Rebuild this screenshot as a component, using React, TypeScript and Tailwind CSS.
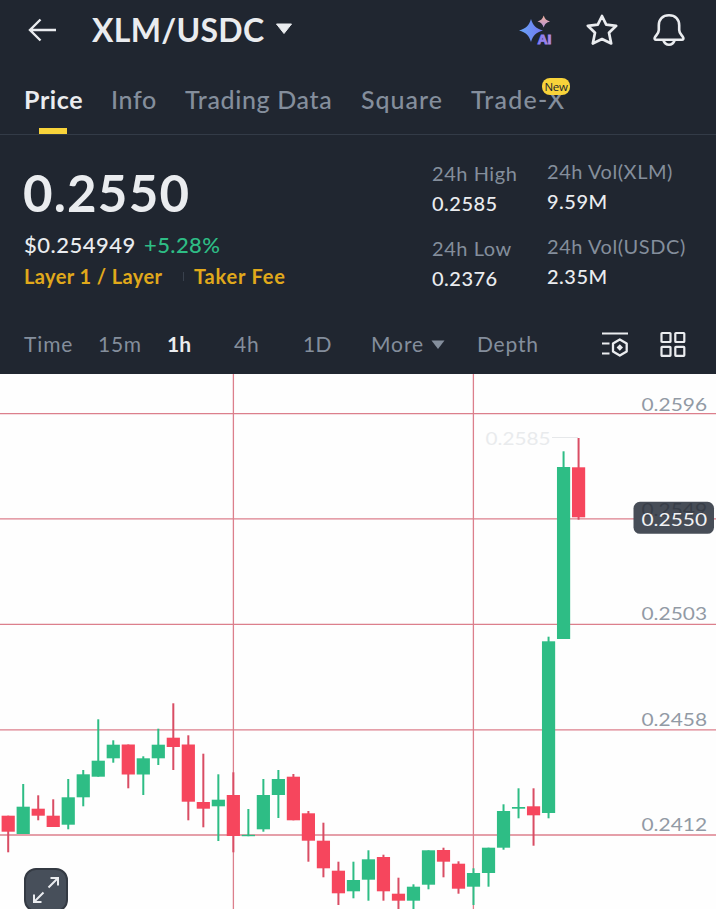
import React from "react";
import clsx from "clsx";

type Candle = {
  high: number;
  top: number;
  bottom: number;
  low: number;
  up: boolean;
};

const CHART_TOP = 374;
const CANDLE_GAP = 15.01;
const UP = "#2ebd85";
const DOWN = "#f6465d";
const DOWN_WICK = "#d94d64";

// [high, body top, body bottom, low, up]
const rows: [number, number, number, number, 0 | 1][] = [
  [815.7, 815.7, 831.7, 852.3, 0],
  [784, 806.7, 834, 834, 1],
  [795.3, 808.7, 815.7, 820.3, 0],
  [799.3, 815.7, 827, 827, 0],
  [779, 797.3, 824.7, 829.3, 1],
  [770, 774.3, 797.3, 806.3, 1],
  [719.3, 760.7, 776.7, 776.7, 1],
  [740.3, 744.7, 758.3, 762.7, 1],
  [744.5, 744.5, 774.5, 788.3, 0],
  [756.3, 758.3, 774.5, 795, 1],
  [728.7, 744.7, 758.3, 765, 1],
  [703.3, 737.7, 747, 770, 0],
  [735.3, 744.5, 801.7, 820.3, 0],
  [753.7, 802, 808.7, 827.3, 0],
  [774.3, 799.7, 806.3, 841, 1],
  [772.3, 795, 836, 852.3, 0],
  [809, 834.8, 836.2, 836.2, 1],
  [779, 795, 829.3, 831.7, 1],
  [770, 779, 795, 818, 1],
  [774, 776.7, 820.3, 820.3, 0],
  [811, 813.3, 840.7, 861.7, 0],
  [822.7, 840.7, 868.3, 877.3, 0],
  [861.7, 870.7, 893.3, 905, 0],
  [861.7, 880, 891.3, 898.3, 1],
  [850.3, 859.3, 879.7, 900.7, 1],
  [854.7, 857, 891.3, 900.7, 0],
  [877.7, 893.7, 900.7, 909, 0],
  [884.3, 886.7, 900.7, 909, 1],
  [850.3, 850.3, 884.7, 889.3, 1],
  [847.7, 850, 861.7, 877.3, 0],
  [861.3, 863.7, 888.7, 893.7, 0],
  [868.3, 873, 886.7, 905, 1],
  [847.7, 847.7, 873, 886.7, 1],
  [804.3, 811, 847.7, 849.7, 1],
  [788.3, 807, 808.7, 818.3, 1],
  [788.3, 806.3, 815.3, 845.7, 0],
  [636.7, 641.3, 813, 818.3, 1],
  [451.3, 467, 639, 639, 1],
  [438, 467.3, 517.3, 519.7, 0],
];

const candles: Candle[] = rows.map(([high, top, bottom, low, up]) => ({
  high: high - CHART_TOP,
  top: top - CHART_TOP,
  bottom: bottom - CHART_TOP,
  low: low - CHART_TOP,
  up: up === 1,
}));

const gridY = [39.6, 144.8, 250.4, 355.8, 461];
const gridX = [233.4, 473.4];

const axisLabels = [
  { text: "0.2596", y: 36.5 },
  { text: "0.2503", y: 246.3 },
  { text: "0.2458", y: 352.3 },
  { text: "0.2412", y: 457.3 },
];

const tabs = [
  { name: "Price", className: "w-[87px] tracking-[0.6px]" },
  { name: "Info", className: "w-[74px] tracking-[0.6px]" },
  { name: "Trading Data", className: "w-[176px] tracking-[0.65px]" },
  { name: "Square", className: "w-[110px] tracking-[1px]" },
  { name: "Trade-X", className: "w-[96px] tracking-[1.2px]" },
];

const intervals = [
  { name: "Time", className: "w-[74px] tracking-[0.9px]" },
  { name: "15m", className: "w-[69px] tracking-[0.7px]" },
  { name: "1h", className: "w-[67px]" },
  { name: "4h", className: "w-[69px] tracking-[0.9px]" },
  { name: "1D", className: "w-[68px] tracking-[0.3px]" },
];

const AiIcon = () => (
  <svg width="36" height="32" viewBox="0 0 36 32" className="block">
    <defs>
      <linearGradient id="ai-main" x1="0" y1="0" x2="1" y2="0">
        <stop offset="0" stopColor="#67a5f5" />
        <stop offset="1" stopColor="#7476f4" />
      </linearGradient>
      <linearGradient id="ai-small" x1="0" y1="0" x2="0" y2="1">
        <stop offset="0" stopColor="#efb09a" />
        <stop offset="1" stopColor="#b893d8" />
      </linearGradient>
      <linearGradient id="ai-text" x1="0" y1="0" x2="1" y2="0">
        <stop offset="0" stopColor="#817cf5" />
        <stop offset="1" stopColor="#b18ae4" />
      </linearGradient>
    </defs>
    <path
      d="M14 5C15.900 11.500 19 14.400 26 16.500C19 18.600 15.900 21.300 14 28C12.100 21.300 9 18.600 2 16.500C9 14.400 12.100 11.500 14 5Z"
      fill="url(#ai-main)"
    />
    <path
      d="M26.700 1.500C27.900 4.900 29.400 6.500 33 7.500C29.400 8.500 27.900 10 26.700 13.500C25.500 10 24 8.500 20.500 7.500C24 6.500 25.500 4.900 26.700 1.500Z"
      fill="url(#ai-small)"
    />
    <text
      x="20.500"
      y="29.500"
      fill="url(#ai-text)"
      stroke="url(#ai-text)"
      strokeWidth="0.800"
      textLength="14"
      lengthAdjust="spacingAndGlyphs"
      className="font-['Liberation_Sans',sans-serif] text-[12px] font-bold"
    >
      AI
    </text>
  </svg>
);

const StarIcon = () => (
  <svg width="34" height="34" viewBox="0 0 34 34" fill="none" className="block">
    <path
      d="M17 3L21.200 11.600L31.200 12.800L24 19.800L26.200 30.500L17 26L7.800 30.500L10 19.800L2.800 12.800L12.800 11.600Z"
      stroke="#eaecef"
      strokeWidth="2.700"
      strokeLinejoin="round"
    />
  </svg>
);

const BellIcon = () => (
  <svg width="34" height="34" viewBox="0 0 34 34" fill="none" className="block">
    <path
      d="M17 2.200C10.500 2.200 6.800 6.500 6.800 12.200V17C6.800 20.500 4 22 2.800 24.500C2.300 25.700 2.800 26.700 4 26.700H30C31.200 26.700 31.700 25.700 31.200 24.500C30 22 27.200 20.500 27.200 17V12.200C27.200 6.500 23.500 2.200 17 2.200Z"
      stroke="#eaecef"
      strokeWidth="2.600"
      strokeLinejoin="round"
    />
    <path
      d="M11.500 27.500C12.500 30.300 14.500 31.700 17 31.700C19.500 31.700 21.500 30.300 22.500 27.500"
      stroke="#eaecef"
      strokeWidth="2.600"
    />
  </svg>
);

const IndicatorIcon = () => (
  <svg width="28" height="28" viewBox="0 0 28 28" fill="none" className="block">
    <path d="M1 2.500H27M1 12.500H8.500M1 22.500H8.500" stroke="#eaecef" strokeWidth="2.200" />
    <path
      d="M18.800 8.500L25.700 12.500V20.500L18.800 24.500L12 20.500V12.500Z"
      stroke="#eaecef"
      strokeWidth="2.300"
      strokeLinejoin="round"
    />
    <path d="M18.800 13.200L22 16.500L18.800 19.800L15.600 16.500Z" fill="#eaecef" />
  </svg>
);

const GridIcon = () => (
  <svg width="28" height="28" viewBox="0 0 28 28" fill="none" className="block">
    <g stroke="#eaecef" strokeWidth="2.200" strokeLinejoin="round">
      <rect x="2.500" y="2" width="9" height="9" rx="0.600" />
      <rect x="16.300" y="2" width="9" height="9" rx="0.600" />
      <rect x="2.500" y="15.800" width="9" height="9" rx="0.600" />
      <rect x="16.300" y="15.800" width="9" height="9" rx="0.600" />
    </g>
  </svg>
);

const Header: React.FC = () => (
  <header className="flex h-[60px] items-center pl-[28px] pr-[30px]">
    <svg width="29" height="24" viewBox="0 0 29 24" fill="none" className="block">
      <path
        d="M28 12H2M12.500 1.500L2 12L12.500 22.500"
        stroke="#eaecef"
        strokeWidth="2.400"
      />
    </svg>
    <h1 className="ml-[35px] w-[183px] text-[32px] leading-none font-bold tracking-[0.3px] whitespace-nowrap text-[#eaecef]">
      XLM/USDC
    </h1>
    <svg width="18" height="12" viewBox="0 0 18 12" className="mb-[2px] block">
      <path d="M1.500 1H16.500L9 10.500Z" fill="#eaecef" stroke="#eaecef" strokeLinejoin="round" />
    </svg>
    <div className="ml-auto flex items-center">
      <AiIcon />
      <div className="ml-[32px]">
        <StarIcon />
      </div>
      <div className="ml-[33px]">
        <BellIcon />
      </div>
    </div>
  </header>
);

const Tabs: React.FC = () => (
  <nav className="flex h-[75px] border-b border-[#333b47] pl-[24px]">
    {tabs.map((tab, i) => (
      <div
        key={tab.name}
        className={clsx(
          "relative pt-[23px] text-[25px] leading-[32px] whitespace-nowrap",
          tab.className,
          i === 0 ? "font-bold text-[#eaecef]" : "font-medium text-[#848e9c]"
        )}
      >
        {tab.name}
        {i === 0 && (
          <span className="absolute bottom-0 left-[15px] h-[6px] w-[28px] bg-[#f8d33a]" />
        )}
        {i === 4 && (
          <span className="absolute top-[18px] left-[71px] flex h-[17px] w-[28px] items-center justify-center rounded-[8px] bg-[#f8d33a] font-['Open_Sans',sans-serif] text-[11.5px] leading-none font-medium tracking-[-0.3px] text-[#202630]">
            New
          </span>
        )}
      </div>
    ))}
  </nav>
);

const Stat = ({ label, value }: { label: string; value: string }) => (
  <div className="h-[75px] whitespace-nowrap">
    <div className="text-[20px] leading-[30px] tracking-[0.55px] text-[#848e9c]">{label}</div>
    <div className="text-[20px] leading-[30px] font-medium tracking-[0.5px] text-[#eaecef]">
      {value}
    </div>
  </div>
);

const Summary: React.FC = () => (
  <section className="flex h-[180px] pl-[24px]">
    <div className="w-[408px] pt-[29px]">
      <div className="-ml-px text-[51px] leading-[58px] font-bold tracking-[1.2px] text-[#eaecef]">
        0.2550
      </div>
      <div className="mt-[7px] flex text-[22px] leading-[32px]">
        <span className="w-[120px] font-medium tracking-[0.5px] text-[#eaecef]">$0.254949</span>
        <span className="font-medium tracking-[0.4px] text-[#2ebd85]">+5.28%</span>
      </div>
      <div className="flex items-center text-[20px] leading-[30px] font-bold whitespace-nowrap text-[#e0a91b]">
        <span className="w-[159px] tracking-[0.4px]">Layer 1 / Layer</span>
        <span className="mr-[10px] h-[9px] w-px bg-[#39414d]" />
        <span className="tracking-[0.8px]">Taker Fee</span>
      </div>
    </div>
    <div className="w-[115px] pt-[23px]">
      <Stat label="24h High" value="0.2585" />
      <Stat label="24h Low" value="0.2376" />
    </div>
    <div className="pt-[21px]">
      <Stat label="24h Vol(XLM)" value="9.59M" />
      <Stat label="24h Vol(USDC)" value="2.35M" />
    </div>
  </section>
);

const IntervalBar: React.FC = () => (
  <div className="flex h-[59px] items-center pl-[24px] text-[21px] leading-none text-[#848e9c]">
    {intervals.map((item) => (
      <span
        key={item.name}
        className={clsx(
          "pb-[2px]",
          item.className,
          item.name === "1h" && "font-bold text-[#eaecef]"
        )}
      >
        {item.name}
      </span>
    ))}
    <span className="w-[60px] pb-[2px] tracking-[0.9px]">More</span>
    <svg width="14" height="10" viewBox="0 0 14 10" className="mr-[32px] block">
      <path d="M0.500 0.500H13.500L7 9Z" fill="#848e9c" />
    </svg>
    <span className="w-[124px] pb-[2px] tracking-[0.8px]">Depth</span>
    <IndicatorIcon />
    <div className="ml-[30px]">
      <GridIcon />
    </div>
  </div>
);

const Chart: React.FC = () => (
  <div className="relative h-[535px] overflow-hidden bg-[#fefefe]">
    <svg
      width="716"
      height="535"
      viewBox="0 0 716 535"
      className="block font-['Lato',sans-serif] text-[18px]"
    >
      <g stroke="#dc7f8c" strokeWidth="1.300">
        {gridY.map((y) => (
          <line key={y} x1="0" x2="716" y1={y} y2={y} />
        ))}
        {gridX.map((x) => (
          <line key={x} x1={x} x2={x} y1="0" y2="535" />
        ))}
      </g>
      {candles.map((c, i) => {
        const x = 8.2 + i * CANDLE_GAP;
        return (
          <g key={i}>
            <rect
              x={x - 1}
              y={c.high}
              width="2"
              height={c.low - c.high}
              fill={c.up ? UP : DOWN_WICK}
            />
            <rect
              x={x - 6.6}
              y={c.top}
              width="13.2"
              height={c.bottom - c.top}
              fill={c.up ? UP : DOWN}
            />
          </g>
        );
      })}
      <line x1="552" x2="578" y1="63.500" y2="63.500" stroke="#e6e8ea" />
      <text x="485.500" y="71" fill="#e9ebed" textLength="65" lengthAdjust="spacingAndGlyphs">
        0.2585
      </text>
      {axisLabels.map((label) => (
        <text
          key={label.text}
          x="641.500"
          y={label.y}
          fill="#929aa5"
          textLength="65.500"
          lengthAdjust="spacingAndGlyphs"
        >
          {label.text}
        </text>
      ))}
      <rect x="633.500" y="127.800" width="80.500" height="32" rx="6.500" fill="#474d57" />
      <text x="641.500" y="142" fill="#383e48" textLength="65.500" lengthAdjust="spacingAndGlyphs">
        0.2549
      </text>
      <text
        x="641.500"
        y="151.500"
        fill="#f1f2f4"
        textLength="65.500"
        lengthAdjust="spacingAndGlyphs"
      >
        0.2550
      </text>
    </svg>
    <button className="absolute top-[494px] left-[24px] flex h-[44px] w-[44px] items-center justify-center rounded-[12px] border-2 border-[#343a43] bg-[#474f5a]">
      <svg width="28" height="28" viewBox="0 0 28 28" fill="none" className="block">
        <path
          d="M16.500 11.500L25.500 2.500M18.500 2H26V9.500M11.500 16.500L2.500 25.500M2 18.500V26H9.500"
          stroke="#eaecef"
          strokeWidth="2"
        />
      </svg>
    </button>
  </div>
);

const App: React.FC = () => (
  <div className="h-[909px] w-[716px] overflow-hidden bg-[#202630] font-['Lato',sans-serif]">
    <Header />
    <Tabs />
    <Summary />
    <IntervalBar />
    <Chart />
  </div>
);

export default App;
